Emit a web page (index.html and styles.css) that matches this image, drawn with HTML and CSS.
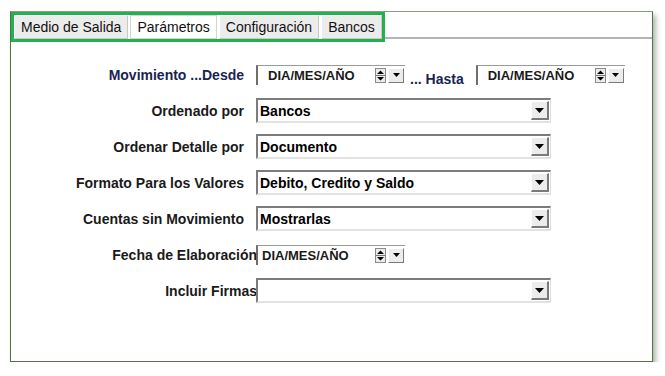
FILE: index.html
```html
<!DOCTYPE html>
<html lang="es">
<head>
<meta charset="UTF-8">
<title>Parámetros</title>
<link rel="stylesheet" href="styles.css">
</head>
<body>

<div class="panel">
  <div class="tabbar">
    <div class="tabs">
      <span class="tab">Medio de Salida</span>
      <span class="tab active">Parámetros</span>
      <span class="tab">Configuración</span>
      <span class="tab">Bancos</span>
    </div>
    <div class="tabline"></div>
  </div>

  <div class="form">
    <label class="lbl navy">Movimiento ...Desde</label>
    <div class="range">
      <div class="date">
        <span class="date-text">DIA/MES/AÑO</span>
        <span class="spin">
          <svg width="11" height="15" viewBox="0 0 11 15"><path d="M2 6h7L5.5 2.5z M2 9h7L5.5 12.5z" fill="#000"/><path d="M1 7.5h9" stroke="#777" stroke-width="1"/></svg>
        </span>
        <span class="drop"><svg width="7" height="4" viewBox="0 0 7 4"><path d="M0 0h7L3.5 4z" fill="#000"/></svg></span>
      </div>
      <span class="hasta">... Hasta</span>
      <div class="date">
        <span class="date-text">DIA/MES/AÑO</span>
        <span class="spin">
          <svg width="11" height="15" viewBox="0 0 11 15"><path d="M2 6h7L5.5 2.5z M2 9h7L5.5 12.5z" fill="#000"/><path d="M1 7.5h9" stroke="#777" stroke-width="1"/></svg>
        </span>
        <span class="drop"><svg width="7" height="4" viewBox="0 0 7 4"><path d="M0 0h7L3.5 4z" fill="#000"/></svg></span>
      </div>
    </div>

    <label class="lbl">Ordenado por</label>
    <div class="select"><span class="sel-text">Bancos</span><span class="sel-btn"><svg width="9" height="5" viewBox="0 0 9 5"><path d="M0 0h9L4.5 5z" fill="#000"/></svg></span></div>

    <label class="lbl">Ordenar Detalle por</label>
    <div class="select"><span class="sel-text">Documento</span><span class="sel-btn"><svg width="9" height="5" viewBox="0 0 9 5"><path d="M0 0h9L4.5 5z" fill="#000"/></svg></span></div>

    <label class="lbl">Formato Para los Valores</label>
    <div class="select"><span class="sel-text">Debito, Credito y Saldo</span><span class="sel-btn"><svg width="9" height="5" viewBox="0 0 9 5"><path d="M0 0h9L4.5 5z" fill="#000"/></svg></span></div>

    <label class="lbl">Cuentas sin Movimiento</label>
    <div class="select"><span class="sel-text">Mostrarlas</span><span class="sel-btn"><svg width="9" height="5" viewBox="0 0 9 5"><path d="M0 0h9L4.5 5z" fill="#000"/></svg></span></div>

    <label class="lbl tight">Fecha de Elaboración</label>
    <div class="range">
      <div class="date short">
        <span class="date-text">DIA/MES/AÑO</span>
        <span class="spin">
          <svg width="11" height="15" viewBox="0 0 11 15"><path d="M2 6h7L5.5 2.5z M2 9h7L5.5 12.5z" fill="#000"/><path d="M1 7.5h9" stroke="#777" stroke-width="1"/></svg>
        </span>
        <span class="drop"><svg width="7" height="4" viewBox="0 0 7 4"><path d="M0 0h7L3.5 4z" fill="#000"/></svg></span>
      </div>
    </div>

    <label class="lbl tight">Incluir Firmas</label>
    <div class="select"><span class="sel-text"></span><span class="sel-btn"><svg width="9" height="5" viewBox="0 0 9 5"><path d="M0 0h9L4.5 5z" fill="#000"/></svg></span></div>
  </div>
</div>

</body>
</html>
```

FILE: styles.css
```css
body {
  margin: 0;
  background: #fff;
  font-family: "Liberation Sans", Arial, sans-serif;
  color: #1a1a1a;
}
.panel {
  margin: 11px 0 0 10px;
  width: 641px;
  height: 349px;
  border: 1px solid #56704a;
  border-top-color: #8c9c84;
  background: #fff;
  box-shadow: 3px 4px 5px rgba(80, 100, 70, 0.45);
}
.tabbar {
  display: flex;
  align-items: flex-end;
  height: 30px;
}
.tabs {
  display: flex;
  gap: 2px;
  height: 24px;
  border: 3px solid #22b14c;
}
.tab {
  display: flex;
  align-items: center;
  height: 22px;
  padding: 0 6px;
  font-size: 14px;
  color: #111;
  background: #ececec;
  border: 1px solid #c8c8c8;
  border-top-color: #fff;
  border-left-color: #fff;
}
.tab.active {
  background: #fff;
  border-color: #d4d4d4;
}
.tabline {
  flex: 1;
  margin-bottom: 3px;
  border-bottom: 2px solid #b4b4b4;
}
.form {
  display: grid;
  grid-template-columns: 245px auto;
  grid-auto-rows: 25px;
  row-gap: 11px;
  padding-top: 20px;
}
.lbl {
  display: flex;
  align-items: center;
  justify-content: flex-end;
  padding-right: 12px;
  font-size: 14px;
  font-weight: bold;
  white-space: nowrap;
}
.lbl.tight {
  padding-right: 0;
  margin-right: -1px;
}
.navy {
  color: #1a2450;
}
.range {
  display: flex;
  align-items: center;
}
.date {
  display: flex;
  align-items: center;
  width: 147px;
  height: 19px;
  border-top: 1px solid #9a9a9a;
  border-left: 2px solid #6e6e6e;
  background: #fff;
}
.date-text {
  flex: 1;
  padding-left: 10px;
  font-size: 13px;
  font-weight: bold;
}
.date.short .date-text {
  padding-left: 4px;
}
.spin {
  display: flex;
  width: 11px;
  height: 15px;
  margin-right: 2px;
  background: #ececec;
  border: 1px solid #8a8a8a;
  box-sizing: border-box;
}
.spin svg {
  margin: -1px;
}
.drop {
  display: flex;
  align-items: center;
  justify-content: center;
  width: 16px;
  height: 15px;
  margin-right: 1px;
  box-sizing: border-box;
  background: #ececec;
  border: 1px solid #fff;
  border-right-color: #7a7a7a;
  border-bottom-color: #7a7a7a;
}
.hasta {
  align-self: flex-end;
  margin: 0 12px 0 5px;
  font-size: 14px;
  font-weight: bold;
  color: #1a2450;
}
.select {
  display: flex;
  align-items: center;
  width: 295px;
  box-sizing: border-box;
  border: 2px solid #7c7c7c;
  border-right: 1px solid #dedede;
  border-bottom: 2px solid #e2e2e2;
  background: #fff;
}
.sel-text {
  flex: 1;
  padding-left: 2px;
  font-size: 14px;
  font-weight: bold;
  color: #000;
}
.sel-btn {
  display: flex;
  align-items: center;
  justify-content: center;
  width: 18px;
  height: 19px;
  margin-right: 1px;
  box-sizing: border-box;
  background: #ececec;
  border: 1px solid #fff;
  border-right: 2px solid #7a7a7a;
  border-bottom: 2px solid #7a7a7a;
}
```
